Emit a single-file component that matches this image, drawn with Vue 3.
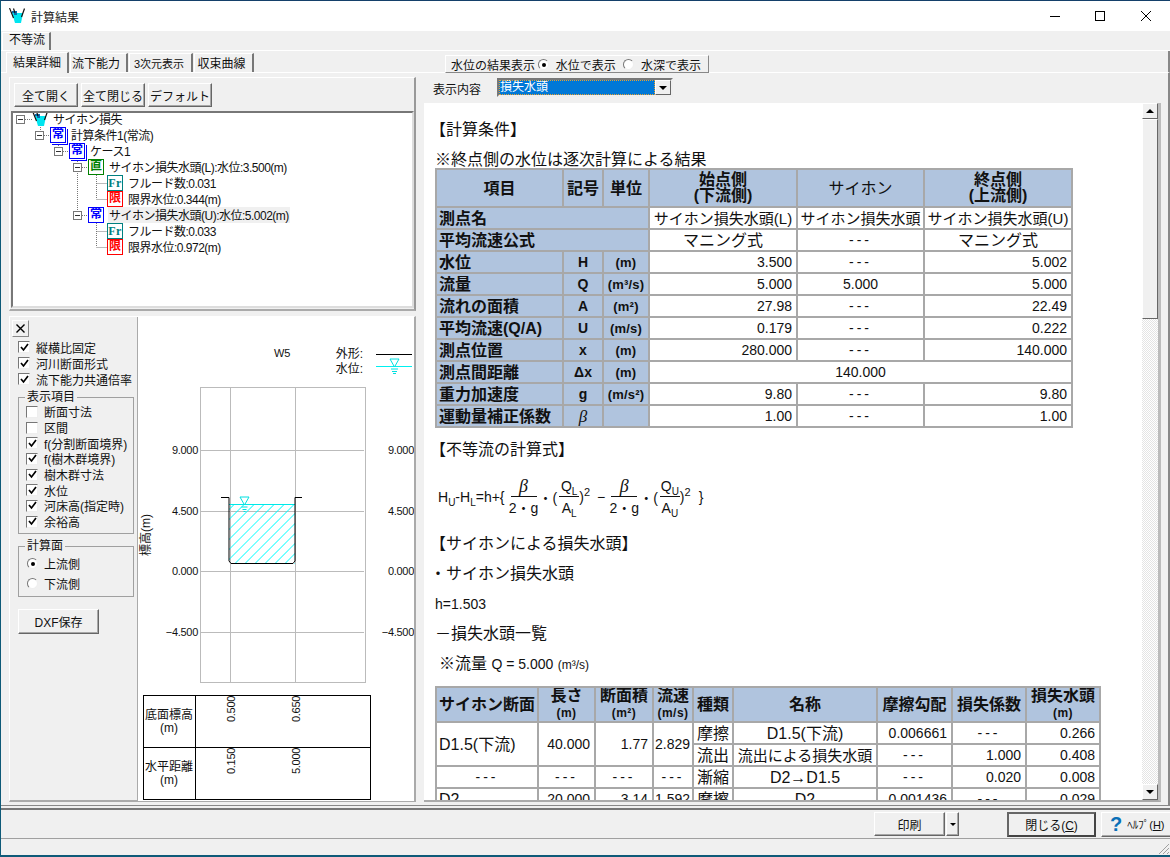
<template>
  <div class="window">
    <div class="titlebar">
      <svg class="app-icon" viewBox="0 0 16 16" width="16" height="16">
        <path d="M3 5L14 5L12 15L6 15Z" fill="#00e5f0" />
        <path d="M3 3H8V7H5V5H3Z" fill="#0a6cb0" />
        <path d="M0.5 0L4.5 10M15.5 0.5L12.5 9M4.5 0.5L6 5" stroke="#111" stroke-width="1.2" fill="none" />
      </svg>
      <span class="title-text">計算結果</span>
      <svg class="win-btn btn-min" width="10" height="10" viewBox="0 0 10 10"><path d="M0 5.5H10" stroke="#000" /></svg>
      <svg class="win-btn btn-max" width="10" height="10" viewBox="0 0 10 10"><rect x="0.5" y="0.5" width="9" height="9" fill="none" stroke="#000" /></svg>
      <svg class="win-btn btn-close" width="10" height="10" viewBox="0 0 10 10"><path d="M0 0L10 10M10 0L0 10" stroke="#000" /></svg>
    </div>

    <div class="outer-tabs">
      <div class="outer-tab">不等流</div>
    </div>

    <div class="inner-tabs">
      <div class="tab active">結果詳細</div>
      <div class="tab t2">流下能力</div>
      <div class="tab t3">3次元表示</div>
      <div class="tab t4">収束曲線</div>
      <div class="level-panel">
        <span class="level-label">水位の結果表示</span>
        <span class="radio on"></span><span class="level-opt">水位で表示</span>
        <span class="radio second"></span><span class="level-opt">水深で表示</span>
      </div>
    </div>

    <div class="page">
      <!-- 左側 -->
      <div class="left-col">
        <div class="tree-panel">
          <div class="tree-btns">
            <button class="btn b64">全て開く</button>
            <button class="btn b64">全て閉じる</button>
            <button class="btn b64">デフォルト</button>
          </div>
          <div class="tree">
            <svg class="tree-lines" width="399" height="193" viewBox="13 113 399 193">
              <path
                d="M25 119.5H32M40.5 127V131M44 135.5H50M58.5 143V147M63 151.5H69M77.5 159V211M82 167.5H88M82 215.5H88M96.5 175V199M96.5 183.5H107M96.5 199.5H107M96.5 223V247M96.5 231.5H107M96.5 247.5H107"
                stroke="#777" stroke-dasharray="1 1" fill="none"
              />
            </svg>
            <div
              v-for="node in treeNodes"
              :key="node.id"
              class="tree-row"
              :style="{ paddingLeft: 3 + node.level * 19 + 'px' }"
            >
              <span class="expander" :class="{ none: !node.open }"></span>
              <svg v-if="node.icon === 'app'" class="tree-app" viewBox="0 0 16 16" width="16" height="16">
                <path d="M3 5L14 5L12 15L6 15Z" fill="#00e5f0" />
                <path d="M3 3H8V7H5V5H3Z" fill="#0a6cb0" />
                <path d="M0.5 0L4.5 10M15.5 0.5L12.5 9M4.5 0.5L6 5" stroke="#111" stroke-width="1.2" fill="none" />
              </svg>
              <span v-else class="node-icon" :class="node.icon">{{ node.mark }}</span>
              <span class="node-text" :class="{ picked: node.picked }">{{ node.text }}</span>
            </div>
          </div>
        </div>

        <div class="lower-panel">
          <div class="controls">
            <button class="x-btn">
              <svg width="9" height="9" viewBox="0 0 9 9"><path d="M0.5 0.5L8.5 8.5M8.5 0.5L0.5 8.5" stroke="#000" stroke-width="1.4" /></svg>
            </button>
            <div class="check-list top-checks">
              <div v-for="c in topChecks" :key="c" class="check-row">
                <span class="check on">
                  <svg width="9" height="9" viewBox="0 0 9 9"><path d="M1 4L3.5 7L8 1" stroke="#000" stroke-width="1.7" fill="none" /></svg>
                </span>
                <span>{{ c }}</span>
              </div>
            </div>
            <fieldset class="group items">
              <legend>表示項目</legend>
              <div v-for="c in itemChecks" :key="c.label" class="check-row">
                <span class="check">
                  <svg v-if="c.on" width="9" height="9" viewBox="0 0 9 9"><path d="M1 4L3.5 7L8 1" stroke="#000" stroke-width="1.7" fill="none" /></svg>
                </span>
                <span>{{ c.label }}</span>
              </div>
            </fieldset>
            <fieldset class="group faces">
              <legend>計算面</legend>
              <div class="radio-row"><span class="radio on"></span><span>上流側</span></div>
              <div class="radio-row"><span class="radio"></span><span>下流側</span></div>
            </fieldset>
            <button class="btn dxf">DXF保存</button>
          </div>

          <svg class="chart" width="276" height="484" viewBox="139 318 276 484">
            <defs>
              <clipPath id="water-clip">
                <rect x="230" y="505" width="66" height="60" />
              </clipPath>
            </defs>
            <text x="283" y="358" class="axis" text-anchor="middle">W5</text>
            <text x="364" y="359" class="t" text-anchor="end">外形:</text>
            <text x="364" y="374" class="t" text-anchor="end">水位:</text>
            <path d="M377 355.5H413" stroke="#000" />
            <path d="M377 367.5H413" stroke="#00f0f0" />
            <path d="M391 360H400L395.5 368ZM392 370H399M393 372.5H398M394 374.5H397" stroke="#00e0e0" fill="#fff" />

            <g stroke="#bbb" fill="none">
              <rect x="201.5" y="388.5" width="165" height="295" />
              <path d="M231.5 388V683M296.5 388V683M201 451.5H365M201 512.5H365M201 572.5H365M201 633.5H365" />
            </g>
            <g class="axis" text-anchor="end">
              <text x="199" y="455">9.000</text>
              <text x="199" y="516">4.500</text>
              <text x="199" y="576">0.000</text>
              <text x="199" y="637">−4.500</text>
              <text x="415" y="455">9.000</text>
              <text x="415" y="516">4.500</text>
              <text x="415" y="576">0.000</text>
              <text x="415" y="637">−4.500</text>
            </g>
            <text class="t" text-anchor="middle" transform="translate(151 536) rotate(-90)">標高(m)</text>

            <g clip-path="url(#water-clip)">
              <polygon v-for="p in hatchBands" :key="p" :points="p" fill="#00ffff" stroke="none" />
            </g>
            <path d="M230 505.5H296" stroke="#00e8e8" />
            <path d="M222 498.5H230V562L232 564.5H294L296 562V498.5H303" stroke="#000" fill="none" />
            <path d="M241 498H250L245.5 506ZM242.5 508H248.5M243.5 510.5H247.5M244.5 512.5H246.5" stroke="#00e0e0" fill="#fff" />

            <g stroke="#000" fill="none">
              <rect x="144.5" y="696.5" width="227" height="104" />
              <path d="M196.5 696V801M144 748.5H372" />
            </g>
            <g class="t" text-anchor="middle">
              <text x="170" y="720">底面標高</text>
              <text x="170" y="733">(m)</text>
              <text x="170" y="772">水平距離</text>
              <text x="170" y="785">(m)</text>
            </g>
            <g class="axis">
              <text transform="translate(236 723) rotate(-90)">0.500</text>
              <text transform="translate(301 723) rotate(-90)">0.650</text>
              <text transform="translate(236 775) rotate(-90)">0.150</text>
              <text transform="translate(301 775) rotate(-90)">5.000</text>
            </g>
          </svg>
        </div>
      </div>

      <!-- 右側 -->
      <div class="right-col">
        <div class="view-bar">
          <span class="view-label">表示内容</span>
          <div class="select">
            <span class="select-val"><span>損失水頭</span></span>
            <span class="select-btn"><i class="tri"></i></span>
          </div>
        </div>
        <div class="report-wrap">
          <div class="report">
            <p class="line pull">【計算条件】</p>
            <p class="note">※終点側の水位は逐次計算による結果</p>

            <table class="grid grid-a">
              <colgroup>
                <col style="width: 127px" /><col style="width: 40px" /><col style="width: 46px" />
                <col style="width: 148px" /><col style="width: 127px" /><col style="width: 148px" />
              </colgroup>
              <tr class="head-row">
                <th>項目</th><th>記号</th><th>単位</th>
                <th class="two">始点側<br />(下流側)</th>
                <th class="plain">サイホン</th>
                <th class="two">終点側<br />(上流側)</th>
              </tr>
              <tr>
                <th colspan="3" class="name">測点名</th>
                <td class="c fit">サイホン損失水頭(L)</td><td class="c fit">サイホン損失水頭</td><td class="c fit">サイホン損失水頭(U)</td>
              </tr>
              <tr>
                <th colspan="3" class="name">平均流速公式</th>
                <td class="c">マニング式</td><td class="c dash">---</td><td class="c">マニング式</td>
              </tr>
              <tr v-for="r in resultRows" :key="r.name">
                <th class="name">{{ r.name }}</th>
                <th class="sym" :class="{ beta: r.sym === 'β' }">{{ r.sym }}</th>
                <th class="unit">{{ r.unit }}</th>
                <template v-if="r.span">
                  <td colspan="3" class="c num">{{ r.span }}</td>
                </template>
                <template v-else>
                  <td class="r num">{{ r.a }}</td>
                  <td class="c" :class="r.b === '---' ? 'dash' : 'num'">{{ r.b }}</td>
                  <td class="r num">{{ r.c }}</td>
                </template>
              </tr>
            </table>

            <p class="line pull h-formula">【不等流の計算式】</p>
            <div class="formula">
              <span>H<sub>U</sub>-H<sub>L</sub>=h+{</span>
              <span class="frac f1"><span class="top beta-g">β</span><span class="bot">2・g</span></span>
              <span class="dot">・(</span>
              <span class="frac f2"><span class="top">Q<sub>L</sub></span><span class="bot">A<sub>L</sub></span></span>
              <span class="close-p">)<sup>2</sup></span>
              <span class="minus">−</span>
              <span class="frac f1"><span class="top beta-g">β</span><span class="bot">2・g</span></span>
              <span class="dot">・(</span>
              <span class="frac f2"><span class="top">Q<sub>U</sub></span><span class="bot">A<sub>U</sub></span></span>
              <span class="close-p">)<sup>2</sup></span>
              <span class="brace">}</span>
            </div>
            <p class="line pull">【サイホンによる損失水頭】</p>
            <p class="line pull">・サイホン損失水頭</p>
            <p class="line num-line">h=1.503</p>
            <p class="line">－損失水頭一覧</p>
            <p class="line flow-note">※流量 <span class="num">Q = 5.000</span> <span class="small-unit">(m³/s)</span></p>

            <table class="grid grid-b">
              <colgroup>
                <col style="width: 102px" /><col style="width: 57px" /><col style="width: 58px" />
                <col style="width: 40px" /><col style="width: 40px" /><col style="width: 144px" />
                <col style="width: 75px" /><col style="width: 74px" /><col style="width: 74px" />
              </colgroup>
              <tr class="head-b">
                <th>サイホン断面</th>
                <th class="two">長さ<br /><small>(m)</small></th>
                <th class="two">断面積<br /><small>(m²)</small></th>
                <th class="two">流速<br /><small>(m/s)</small></th>
                <th>種類</th>
                <th>名称</th>
                <th>摩擦勾配</th>
                <th>損失係数</th>
                <th class="two">損失水頭<br /><small>(m)</small></th>
              </tr>
              <tr>
                <td rowspan="2" class="l">D1.5(下流)</td>
                <td rowspan="2" class="r num">40.000</td>
                <td rowspan="2" class="r num">1.77</td>
                <td rowspan="2" class="r num tight">2.829</td>
                <td class="c">摩擦</td><td class="c">D1.5(下流)</td>
                <td class="r num">0.006661</td><td class="c dash">---</td><td class="r num">0.266</td>
              </tr>
              <tr>
                <td class="c">流出</td><td class="c fit">流出による損失水頭</td>
                <td class="c dash">---</td><td class="r num">1.000</td><td class="r num">0.408</td>
              </tr>
              <tr>
                <td class="c dash">---</td><td class="c dash">---</td><td class="c dash">---</td><td class="c dash">---</td>
                <td class="c">漸縮</td><td class="c">D2→D1.5</td>
                <td class="c dash">---</td><td class="r num">0.020</td><td class="r num">0.008</td>
              </tr>
              <tr>
                <td class="l">D2</td><td class="r num">20.000</td><td class="r num">3.14</td><td class="r num tight">1.592</td>
                <td class="c">摩擦</td><td class="c">D2</td>
                <td class="r num">0.001436</td><td class="c dash">---</td><td class="r num">0.029</td>
              </tr>
            </table>
          </div>
          <div class="scrollbar">
            <span class="sb-btn"><i class="tri up"></i></span>
            <span class="sb-thumb"></span>
            <span class="sb-track"></span>
            <span class="sb-btn"><i class="tri"></i></span>
          </div>
        </div>
      </div>
    </div>

    <div class="sep"></div>

    <div class="footer">
      <button class="btn print">印刷</button>
      <button class="btn print-arrow"><i class="tri small"></i></button>
      <button class="btn close-btn">閉じる(<u>C</u>)</button>
      <button class="btn help-btn"><b class="help-mark">?</b><span>ﾍﾙﾌﾟ(<u>H</u>)</span></button>
    </div>

    <div class="status">
      <svg class="grip" width="12" height="12" viewBox="0 0 12 12">
        <path d="M11 1L1 11M11 5L5 11M11 9L9 11" stroke="#a0a0a0" stroke-width="1" />
      </svg>
    </div>
  </div>
</template>

<script setup>
// ツリーの内容
const treeNodes = [
  { id: 1, level: 0, open: true, icon: 'app', text: 'サイホン損失' },
  { id: 2, level: 1, open: true, icon: 'blue stack', mark: '常', text: '計算条件1(常流)' },
  { id: 3, level: 2, open: true, icon: 'blue stack', mark: '常', text: 'ケース1' },
  { id: 4, level: 3, open: true, icon: 'green', mark: '直', text: 'サイホン損失水頭(L):水位:3.500(m)' },
  { id: 5, level: 4, icon: 'teal', mark: 'Fr', text: 'フルード数:0.031' },
  { id: 6, level: 4, icon: 'red', mark: '限', text: '限界水位:0.344(m)' },
  { id: 7, level: 3, open: true, icon: 'blue', mark: '常', text: 'サイホン損失水頭(U):水位:5.002(m)', picked: true },
  { id: 8, level: 4, icon: 'teal', mark: 'Fr', text: 'フルード数:0.033' },
  { id: 9, level: 4, icon: 'red', mark: '限', text: '限界水位:0.972(m)' }
]

const topChecks = ['縦横比固定', '河川断面形式', '流下能力共通倍率']

const itemChecks = [
  { label: '断面寸法', on: false },
  { label: '区間', on: false },
  { label: 'f(分割断面境界)', on: true },
  { label: 'f(樹木群境界)', on: true },
  { label: '樹木群寸法', on: true },
  { label: '水位', on: true },
  { label: '河床高(指定時)', on: true },
  { label: '余裕高', on: true }
]

// 計算条件の表
const resultRows = [
  { name: '水位', sym: 'H', unit: '(m)', a: '3.500', b: '---', c: '5.002' },
  { name: '流量', sym: 'Q', unit: '(m³/s)', a: '5.000', b: '5.000', c: '5.000' },
  { name: '流れの面積', sym: 'A', unit: '(m²)', a: '27.98', b: '---', c: '22.49' },
  { name: '平均流速(Q/A)', sym: 'U', unit: '(m/s)', a: '0.179', b: '---', c: '0.222' },
  { name: '測点位置', sym: 'x', unit: '(m)', a: '280.000', b: '---', c: '140.000' },
  { name: '測点間距離', sym: 'Δx', unit: '(m)', span: '140.000' },
  { name: '重力加速度', sym: 'g', unit: '(m/s²)', a: '9.80', b: '---', c: '9.80' },
  { name: '運動量補正係数', sym: 'β', unit: '', a: '1.00', b: '---', c: '1.00' }
]

// 水面下のハッチング(細い帯)
const hatchBands = []
for (let x = 230; x < 370; x += 10) {
  hatchBands.push(`${x - 70},570 ${x},500 ${x + 1.1},500 ${x - 68.9},570`)
}
</script>

<style>
html,
body {
  margin: 0;
  background: #f0f0f0;
}
</style>

<style scoped>
.window {
  box-sizing: border-box;
  width: 1170px;
  height: 857px;
  overflow: hidden;
  display: flex;
  flex-direction: column;
  background: #f0f0f0;
  border-top: 1px solid #14406a;
  border-left: 1px solid #0e5a78;
  border-bottom: 2px solid #0e5a78;
  font-family: "Liberation Sans", "Noto Sans CJK JP", sans-serif;
  font-size: 12px;
  color: #111;
}

/* タイトルバー */
.titlebar {
  height: 30px;
  flex: none;
  background: #fff;
  display: flex;
  align-items: center;
  padding-left: 8px;
}
.app-icon {
  flex: none;
  margin-right: 6px;
}
.title-text {
  flex: none;
  width: 48px;
  white-space: nowrap;
  font-size: 12px;
  color: #222;
}
.win-btn {
  flex: none;
}
.btn-min {
  margin-left: 971px;
}
.btn-max {
  margin-left: 35px;
}
.btn-close {
  margin-left: 36px;
}

/* タブ */
.outer-tabs {
  height: 20px;
  flex: none;
  box-sizing: border-box;
  border-bottom: 1px solid #fff;
  padding-left: 1px;
}
.outer-tab {
  width: 49px;
  height: 18px;
  margin-top: 1px;
  box-sizing: border-box;
  border-left: 1px solid #fff;
  border-top: 1px solid #fff;
  border-right: 2px solid #777;
  padding-left: 6px;
  line-height: 15px;
}
.inner-tabs {
  height: 22px;
  flex: none;
  display: flex;
  align-items: flex-end;
  padding-left: 5px;
  box-sizing: border-box;
  border-bottom: 1px solid #fff;
  border-right: 2px solid #888;
}
.tab {
  width: 60px;
  height: 19px;
  box-sizing: border-box;
  margin-right: 1px;
  border-top: 1px solid #fff;
  border-left: 1px solid #fff;
  border-right: 2px solid #777;
  text-align: center;
  line-height: 21px;
  white-space: nowrap;
}
.tab.active {
  width: 63px;
  height: 21px;
  line-height: 20px;
  margin-bottom: -1px;
  background: #f0f0f0;
}
.t2 {
  width: 58px;
  padding-right: 5px;
}
.t3 {
  width: 64px;
  font-size: 11px;
  padding-right: 3px;
}
.t4 {
  width: 60px;
  padding-right: 4px;
}
.level-panel {
  margin-left: 190px;
  margin-bottom: -1px;
  width: 264px;
  height: 18px;
  box-sizing: border-box;
  display: flex;
  align-items: center;
  padding-left: 5px;
  border: 1px solid;
  border-color: #fff #888 #888 #fff;
  align-self: flex-end;
}
.level-label {
  width: 88px;
  white-space: nowrap;
}
.level-opt {
  margin-left: 7px;
  white-space: nowrap;
  width: 68px;
}
.radio {
  flex: none;
  box-sizing: border-box;
  display: inline-block;
  width: 11px;
  height: 11px;
  border-radius: 50%;
  border: 1px solid;
  border-color: #777 #eee #eee #777;
  background: #fff;
  position: relative;
}
.radio.on::after {
  content: "";
  position: absolute;
  left: 3px;
  top: 3px;
  width: 4px;
  height: 4px;
  border-radius: 50%;
  background: #000;
}

/* ページ */
.page {
  height: 732px;
  flex: none;
  display: flex;
  box-sizing: border-box;
  padding: 4px 7px 3px 8px;
  border-right: 2px solid #888;
}
.left-col {
  width: 407px;
  flex: none;
  display: flex;
  flex-direction: column;
}
.tree-panel {
  height: 234px;
  flex: none;
  box-sizing: border-box;
  border: 1px solid;
  border-width: 1px 2px 2px 1px;
  border-color: #fff #999 #aaa #fff;
}
.tree-btns {
  display: flex;
  gap: 3px;
  padding: 5px 0 0 4px;
  height: 28px;
  box-sizing: border-box;
}
.btn {
  font: inherit;
  color: #111;
  background: #f0f0f0;
  border: 1px solid;
  border-color: #fff #666 #666 #fff;
  box-shadow: inset -1px -1px 0 #a8a8a8;
  padding: 0;
  white-space: nowrap;
}
.b64 {
  width: 64px;
  height: 24px;
}
.tree {
  position: relative;
  margin: 5px 0 0 1px;
  width: 403px;
  height: 197px;
  box-sizing: border-box;
  background: #fff;
  border: 2px solid;
  border-color: #777 #ddd #ddd #777;
  overflow: hidden;
}
.tree-lines {
  position: absolute;
  left: 0;
  top: 0;
  pointer-events: none;
}
.tree-row {
  height: 16px;
  display: flex;
  align-items: center;
  position: relative;
  top: -2px;
}
.expander {
  flex: none;
  box-sizing: border-box;
  width: 9px;
  height: 9px;
  margin-right: 6px;
  border: 1px solid #777;
  background: linear-gradient(#333, #333) center / 5px 1px no-repeat #fff;
}
.expander.none {
  visibility: hidden;
}
.tree-app {
  flex: none;
  margin-left: 1px;
}
.node-icon {
  flex: none;
  box-sizing: border-box;
  width: 16px;
  height: 16px;
  border: 1px solid;
  background: #fff;
  font-size: 12px;
  font-weight: 700;
  line-height: 13px;
  text-align: center;
  overflow: hidden;
}
.node-icon.blue {
  color: #0000ff;
  border-color: #0000ff;
}
.node-icon.stack {
  box-shadow: 1px 1px 0 #fff, 2px 2px 0 #0000ff;
}
.node-icon.green {
  color: #008000;
  border-color: #008000;
}
.node-icon.teal {
  color: #008080;
  border-color: #008080;
  font-family: "Liberation Serif", serif;
  line-height: 14px;
  letter-spacing: 0.5px;
}
.node-icon.red {
  color: #ff0000;
  border-color: #ff0000;
}
.node-text {
  margin-left: 4px;
  padding: 0 1px;
  height: 16px;
  line-height: 18px;
  letter-spacing: -0.5px;
  white-space: nowrap;
}
.node-text.picked {
  background: #f0f0f0;
}

.lower-panel {
  margin-top: 5px;
  flex: 1;
  display: flex;
  min-height: 0;
  box-sizing: border-box;
  border: 1px solid;
  border-width: 1px 2px 2px 1px;
  border-color: #fff #aaa #aaa #fff;
}
.controls {
  width: 128px;
  flex: none;
  box-sizing: border-box;
  padding: 3px 0 0 2px;
  border-right: 1px solid #aaa;
}
.x-btn {
  display: flex;
  align-items: center;
  justify-content: center;
  width: 17px;
  height: 17px;
  padding: 0;
  background: #f0f0f0;
  border: 1px solid;
  border-color: #fff #888 #888 #fff;
}
.check-row {
  height: 16px;
  display: flex;
  align-items: center;
  white-space: nowrap;
}
.check {
  flex: none;
  box-sizing: border-box;
  display: flex;
  align-items: center;
  justify-content: center;
  width: 12px;
  height: 12px;
  margin-right: 6px;
  background: #fff;
  border: 1px solid;
  border-color: #777 #eee #eee #777;
}
.top-checks {
  margin: 2px 0 0 6px;
}
.group {
  margin: 0 0 0 6px;
  padding: 0 0 0 7px;
  width: 116px;
  box-sizing: border-box;
  border: 1px solid #a0a0a0;
  position: relative;
}
.group legend {
  padding: 0 2px;
  margin-left: -1px;
  line-height: 14px;
}
.items {
  margin-top: 3px;
  height: 144px;
}
.items .check-row {
  height: 15.7px;
}
.faces {
  margin-top: 5px;
  height: 58px;
}
.radio-row {
  height: 20px;
  display: flex;
  align-items: center;
  gap: 6px;
  padding-left: 1px;
}
.dxf {
  display: block;
  margin: 12px 0 0 6px;
  width: 81px;
  height: 25px;
}
.chart {
  flex: none;
  background: #fff;
  display: block;
}
.chart .t,
.chart .t text {
  font-family: "Liberation Sans", "Noto Sans CJK JP", sans-serif;
  font-size: 12px;
  fill: #111;
}
.chart .axis,
.chart .axis text {
  font-family: "Liberation Sans", sans-serif;
  font-size: 11px;
  letter-spacing: -0.3px;
  fill: #111;
}

/* 右側 */
.right-col {
  margin-left: 8px;
  width: 737px;
  flex: none;
  display: flex;
  flex-direction: column;
  min-height: 0;
}
.view-bar {
  height: 26px;
  flex: none;
  display: flex;
  align-items: flex-start;
  padding-top: 1px;
  box-sizing: border-box;
}
.view-label {
  margin: 2px 0 0 9px;
  width: 64px;
}
.select {
  display: flex;
  width: 176px;
  height: 19px;
  box-sizing: border-box;
  border: 2px solid;
  border-color: #777 #eee #eee #777;
}
.select-val {
  flex: 1;
  background: #0078d7;
  color: #fff;
  line-height: 14px;
  padding-left: 1px;
  outline: 1px dotted #e8a030;
  outline-offset: -1px;
  overflow: hidden;
}
.select-btn {
  width: 16px;
  flex: none;
  box-sizing: border-box;
  display: flex;
  align-items: center;
  justify-content: center;
  background: #f0f0f0;
  border: 1px solid;
  border-color: #fff #666 #666 #fff;
}
.tri {
  width: 0;
  height: 0;
  border-left: 4px solid transparent;
  border-right: 4px solid transparent;
  border-top: 4px solid #000;
}
.tri.up {
  border-top: 0;
  border-bottom: 4px solid #000;
}
.tri.small {
  border-left-width: 3px;
  border-right-width: 3px;
  border-top-width: 3px;
}
.report-wrap {
  flex: 1;
  min-height: 0;
  display: flex;
  box-sizing: border-box;
  border-right: 3px solid #bbb;
  border-bottom: 2px solid #aaa;
}
.report {
  flex: 1;
  min-width: 0;
  overflow: hidden;
  background: #fff;
  box-sizing: border-box;
  padding-left: 11px;
  padding-top: 12px;
  font-size: 16px;
  color: #111;
}
.scrollbar {
  width: 16px;
  flex: none;
  display: flex;
  flex-direction: column;
}
.sb-btn {
  height: 16px;
  flex: none;
  box-sizing: border-box;
  display: flex;
  align-items: center;
  justify-content: center;
  background: #f0f0f0;
  border: 1px solid;
  border-color: #fff #666 #666 #fff;
}
.sb-thumb {
  height: 200px;
  flex: none;
  box-sizing: border-box;
  background: #f0f0f0;
  border: 1px solid;
  border-color: #fff #666 #666 #fff;
}
.sb-track {
  flex: 1;
  background: repeating-conic-gradient(#e4e4e4 0 25%, #fff 0 50%) 0 0 / 2px 2px;
}

.line {
  margin: 0;
  height: 30px;
  line-height: 30px;
  white-space: nowrap;
}
.pull {
  margin-left: -5px;
}
.note {
  margin: 0;
  height: 23px;
  line-height: 30px;
  white-space: nowrap;
}
.h-formula {
  margin-top: 7px;
}
.num-line,
.num {
  font-size: 14px;
}
.flow-note {
  padding-left: 4px;
}
.small-unit {
  font-size: 12px;
}

/* 表 */
.grid {
  border-collapse: collapse;
  table-layout: fixed;
  font-size: 16px;
  background: #fff;
}
.grid-a {
  width: 636px;
}
.grid-b {
  width: 664px;
  margin-top: 7px;
}
.grid th,
.grid td {
  border: 2px solid #a8a8a8;
  padding: 0 2px;
  height: 20px;
  line-height: 19px;
  white-space: nowrap;
  overflow: hidden;
}
.grid th {
  background: #b0c4de;
  font-weight: 700;
}
.grid .head-row th {
  height: 36px;
  font-size: 16px;
}
.grid .head-row .plain {
  font-weight: 400;
}
.grid .head-b th {
  height: 31px;
}
.grid .two {
  line-height: 16px;
}
.two small {
  font-size: 12px;
  letter-spacing: 0.5px;
}
.grid .name {
  text-align: left;
}
.grid .sym {
  text-align: center;
  font-size: 14px;
}
.grid .beta {
  font-family: "Liberation Serif", serif;
  font-style: italic;
  font-size: 17px;
  font-weight: 400;
}
.grid .unit {
  font-size: 13px;
  letter-spacing: 0.2px;
  padding: 0;
}
.grid .fit {
  font-size: 15px;
  padding: 0;
}
.c {
  text-align: center;
}
.grid .r {
  text-align: right;
  padding-right: 4px;
}
.grid .tight {
  padding: 0 2px 0 0;
}
.l {
  text-align: left;
}
.dash {
  font-size: 14px;
  letter-spacing: 3px;
}

/* 計算式 */
.formula {
  height: 64px;
  display: flex;
  align-items: center;
  margin-left: 3px;
  font-size: 14px;
  white-space: nowrap;
}
.formula sub {
  font-size: 10px;
  line-height: 0;
}
.formula sup {
  font-size: 11px;
  line-height: 0;
}
.frac {
  display: flex;
  flex-direction: column;
  align-items: center;
  margin: 0 0 0 6px;
}
.frac .top {
  border-bottom: 1px solid #111;
  width: 100%;
  text-align: center;
  line-height: 20px;
}
.frac .bot {
  line-height: 22px;
}
.f1 {
  width: 26px;
}
.f2 {
  width: 20px;
  margin-left: 2px;
}
.beta-g {
  font-family: "Liberation Serif", serif;
  font-style: italic;
  font-size: 18px;
}
.dot {
  margin-left: 2px;
}
.close-p {
  margin-left: 0;
}
.minus {
  margin-left: 7px;
}
.brace {
  margin-left: 8px;
}

/* 下部 */
.sep {
  height: 5px;
  flex: none;
  box-sizing: border-box;
  border-top: 1px solid #888;
  border-bottom: 2px solid #777;
  background: #f0f0f0;
}
.footer {
  height: 28px;
  flex: none;
  display: flex;
  align-items: center;
  padding-left: 873px;
  box-sizing: border-box;
  white-space: nowrap;
}
.print {
  width: 71px;
  height: 24px;
  flex: none;
}
.print-arrow {
  width: 13px;
  height: 24px;
  flex: none;
  margin-left: 1px;
  display: flex;
  align-items: center;
  justify-content: center;
}
.close-btn {
  width: 89px;
  height: 25px;
  flex: none;
  margin-left: 48px;
  border: 2px solid;
  border-color: #666 #444 #444 #666;
  box-shadow: none;
}
.help-btn {
  width: 80px;
  height: 25px;
  flex: none;
  margin-left: 5px;
  display: flex;
  align-items: center;
  padding-left: 8px;
  font-size: 11px;
  overflow: hidden;
}
.help-mark {
  font-size: 20px;
  color: #0a70b8;
  margin-right: 5px;
  line-height: 20px;
}
.status {
  height: 17px;
  flex: none;
  box-sizing: border-box;
  border-top: 1px solid #a0a0a0;
  display: flex;
  justify-content: flex-end;
  align-items: flex-end;
}
.grip {
  display: block;
}
</style>
